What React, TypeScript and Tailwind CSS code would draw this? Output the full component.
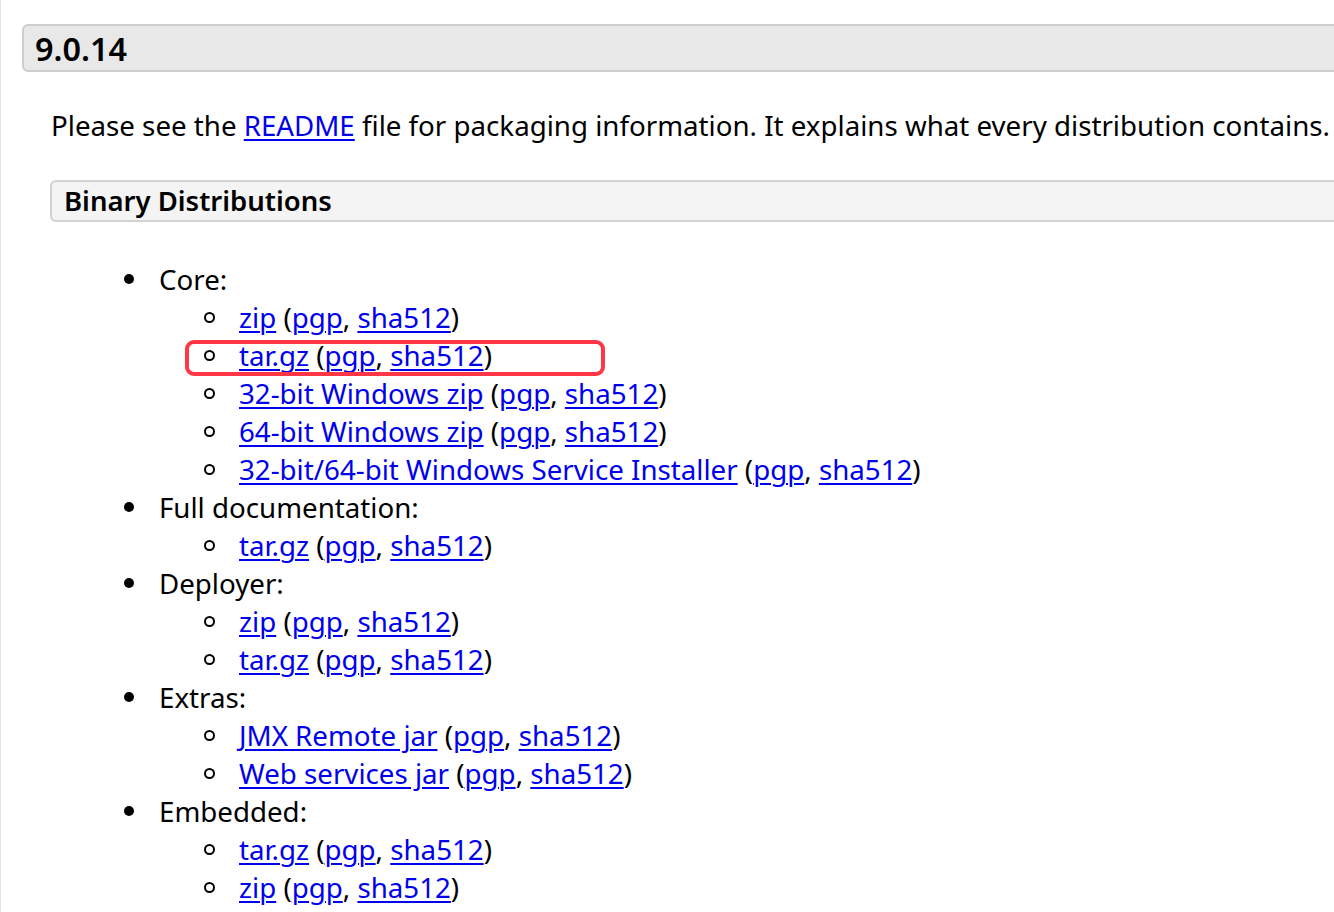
const font = { fontFamily: '"Noto Sans", "Open Sans", sans-serif' }

type Group = { title: string; items: string[] }

const groups: Group[] = [
	{
		title: 'Core:',
		items: [
			'zip',
			'tar.gz',
			'32-bit Windows zip',
			'64-bit Windows zip',
			'32-bit/64-bit Windows Service Installer',
		],
	},
	{ title: 'Full documentation:', items: ['tar.gz'] },
	{ title: 'Deployer:', items: ['zip', 'tar.gz'] },
	{ title: 'Extras:', items: ['JMX Remote jar', 'Web services jar'] },
	{ title: 'Embedded:', items: ['tar.gz', 'zip'] },
]

const Link = ({ children }: { children: React.ReactNode }) => (
	<a
		href="#"
		className="text-[#0000ee] underline decoration-2 underline-offset-[3px]"
	>
		{children}
	</a>
)

const App = () => {
	return (
		<div
			className="relative h-[912px] w-[1334px] overflow-hidden border-l border-[#e2e2e2] bg-white pt-[24px] text-black"
			style={font}
		>
			{/* version header */}
			<div className="ml-[21px] flex h-[48px] w-[1340px] items-center rounded-[6px] border-2 border-[#cdcdcd] bg-[#e8e8e8] pl-[11px]">
				<span className="text-[32.4px] font-semibold leading-none">9.0.14</span>
			</div>

			<p className="mt-[34px] ml-[50px] text-[27.7px] leading-[38px]">
				Please see the <Link>README</Link> file for packaging information. It
				explains what every distribution contains.
			</p>

			<div className="mt-[36px] ml-[49px] flex h-[42px] w-[1300px] items-center rounded-[6px] border-2 border-[#d2d2d2] bg-[#f4f4f4] pl-[12px]">
				<span className="text-[27.5px] font-semibold leading-none">
					Binary Distributions
				</span>
			</div>

			<ul className="mt-[38px] text-[27.7px] leading-[38px]">
				{groups.map((g) => (
					<li key={g.title}>
						<div className="flex h-[38px] items-center">
							<span className="ml-[123px] h-[10px] w-[10px] rounded-full bg-black" />
							<span className="ml-[25px]">{g.title}</span>
						</div>
						<ul>
							{g.items.map((it, i) => (
								<li key={i} className="flex h-[38px] items-center">
									<span className="ml-[203px] h-[11px] w-[11px] rounded-full border-2 border-black" />
									<span className="ml-[24px] whitespace-nowrap">
										<Link>{it}</Link> (<Link>pgp</Link>, <Link>sha512</Link>)
									</span>
								</li>
							))}
						</ul>
					</li>
				))}
			</ul>

			{/* annotation */}
			<div className="absolute top-[340px] left-[184px] h-[36px] w-[420px] rounded-[9px] border-4 border-[#ff3646]" />
		</div>
	)
}

export default App
